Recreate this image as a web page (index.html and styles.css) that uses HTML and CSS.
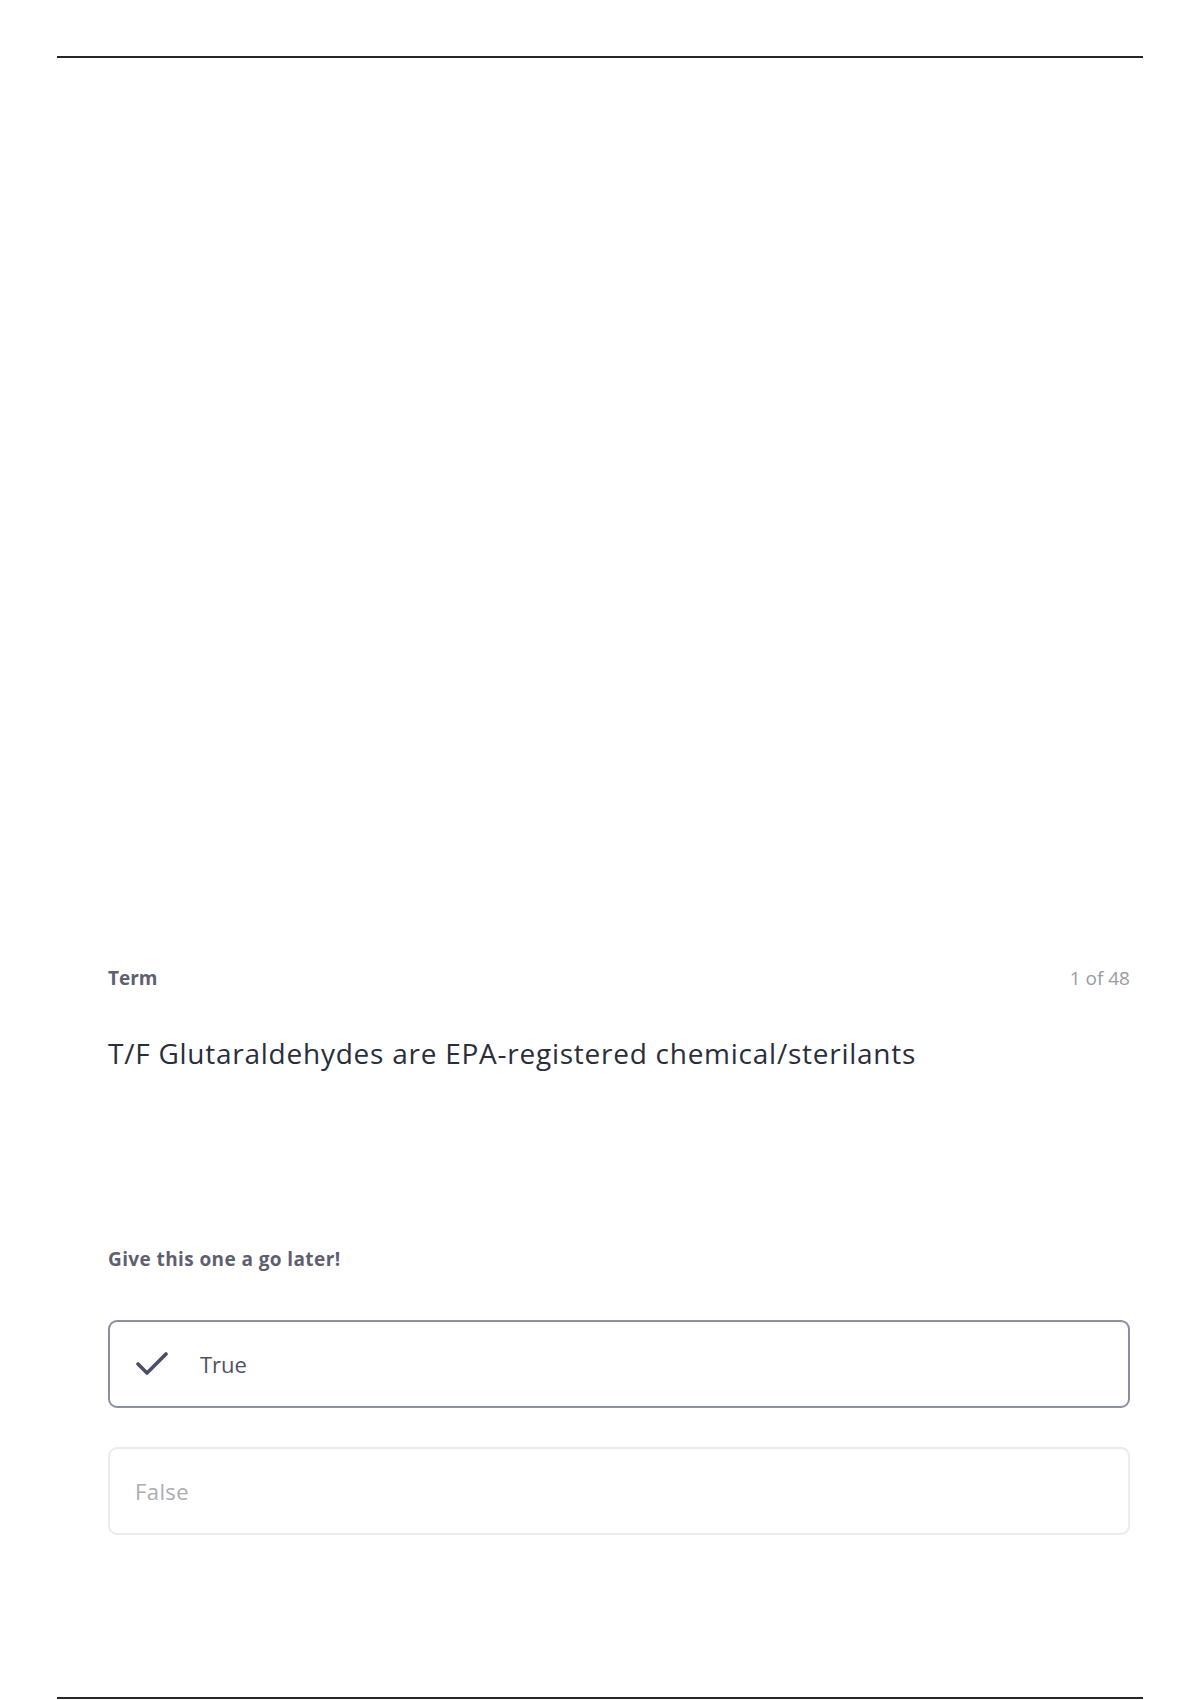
FILE: index.html
```html
<!DOCTYPE html>
<html lang="en">
	<head>
		<meta charset="UTF-8" />
		<meta name="viewport" content="width=device-width, initial-scale=1.0" />
		<title>Term 1 of 48</title>
		<link rel="stylesheet" href="styles.css">
	</head>

	<body>
		<div class="frame">
			<div class="rule"></div>

			<div class="card">
				<div class="card-head">
					<span class="label">Term</span>
					<span class="count">1 of 48</span>
				</div>

				<div class="question">T/F Glutaraldehydes are EPA-registered chemical/sterilants</div>

				<div class="hint">Give this one a go later!</div>

				<div class="option selected">
					<svg class="check" width="32" height="26" viewBox="0 0 32 26">
						<path d="M2 13 L11 22 L30 3" fill="none" stroke="currentColor" stroke-width="3.6" stroke-linecap="round" stroke-linejoin="round" />
					</svg>
					<span>True</span>
				</div>

				<div class="option muted">
					<span>False</span>
				</div>
			</div>

			<div class="rule rule-bottom"></div>
		</div>
	</body>
</html>
```

FILE: styles.css
```css
:root {
	--bg-color: #ffffff;
	--rule-color: #262626;
	--label-color: #5e6072;
	--count-color: #9b9ba3;
	--text-color: #2a2e3c;
	--option-text: #4f5160;
	--check-color: #4b4e68;
	--selected-border: #8d8fa1;
	--muted-border: #ebebef;
	--muted-text: #acacb2;
}

body {
	margin: 0;
	background-color: var(--bg-color);
	font-family: "Open Sans", "Lato", sans-serif;
	color: var(--text-color);
}

.frame {
	padding: 0 57px;
}

.rule {
	height: 2px;
	margin-top: 56px;
	background-color: var(--rule-color);
}

.rule-bottom {
	margin-top: 162px;
}

.card {
	padding: 0 13px 0 51px;
	margin-top: 908px;
}

.card-head {
	display: flex;
	justify-content: space-between;
	align-items: baseline;
	font-size: 19px;
	line-height: 24px;
}

.label {
	font-weight: 700;
	color: var(--label-color);
}

.count {
	color: var(--count-color);
}

.question {
	margin-top: 46px;
	font-size: 28px;
	line-height: 34px;
	letter-spacing: 0.75px;
}

.hint {
	margin-top: 178px;
	font-size: 19px;
	line-height: 22px;
	font-weight: 700;
	letter-spacing: 0.4px;
	color: var(--label-color);
}

.option {
	box-sizing: border-box;
	height: 88px;
	display: flex;
	align-items: center;
	padding: 0 25px;
	border: 2px solid var(--muted-border);
	border-radius: 9px;
	font-size: 22px;
}

.option.selected {
	margin-top: 50px;
	border-color: var(--selected-border);
	color: var(--option-text);
}

.option.muted {
	margin-top: 39px;
	color: var(--muted-text);
	letter-spacing: 0.4px;
}

.check {
	color: var(--check-color);
	margin-left: 1px;
	margin-right: 32px;
}
```
